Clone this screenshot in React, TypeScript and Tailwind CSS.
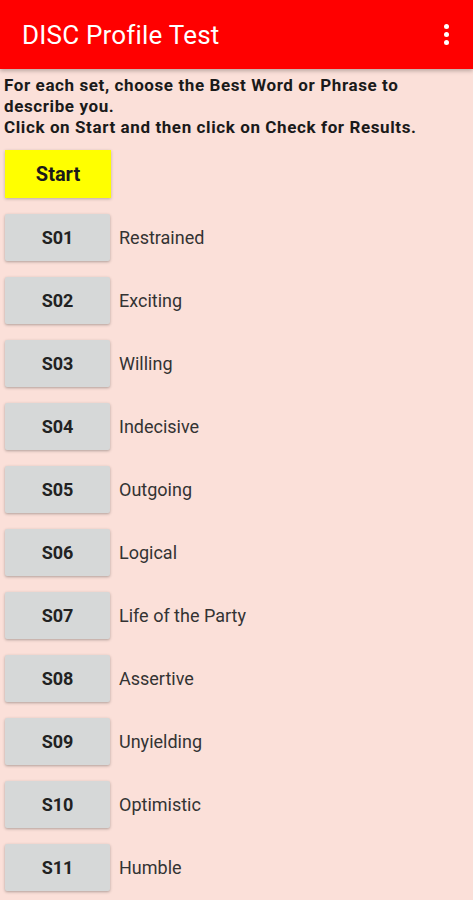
const words = [
  "Restrained",
  "Exciting",
  "Willing",
  "Indecisive",
  "Outgoing",
  "Logical",
  "Life of the Party",
  "Assertive",
  "Unyielding",
  "Optimistic",
  "Humble",
]

export default function App() {
  return (
    <div className="h-[900px] overflow-hidden bg-[#fbe0d9] font-['Roboto',sans-serif]">
      <header className="h-[69px] bg-[#ff0000] flex items-center justify-between pl-[22px] pr-[24px] shadow-[0_2px_4px_rgba(0,0,0,0.25)]">
        <h1 className="text-white text-[26px] tracking-[0.2px] leading-none">DISC Profile Test</h1>
        <div className="flex flex-col gap-[3px]">
          <span className="w-[5px] h-[5px] rounded-full bg-white" />
          <span className="w-[5px] h-[5px] rounded-full bg-white" />
          <span className="w-[5px] h-[5px] rounded-full bg-white" />
        </div>
      </header>
      <p className="px-[4px] pt-[6px] text-[17px] leading-[21px] font-bold tracking-[0.6px] text-[#1a1a1a]">
        For each set, choose the Best Word or Phrase to describe you.
        <br />
        Click on Start and then click on Check for Results.
      </p>
      <div className="px-[5px] pt-[12px] flex flex-col gap-[16px]">
        <button className="w-[106px] h-[48px] bg-[#ffff00] text-[20px] font-bold text-[#1a1a1a] shadow-[0_1px_3px_rgba(0,0,0,0.25)]">
          Start
        </button>
        {words.map((w, i) => (
          <div key={i} className="flex items-center gap-[9px]">
            <button className="w-[105px] h-[47px] shrink-0 rounded-[2px] bg-[#d6d8d8] text-[18px] font-bold text-[#222] shadow-[0_1px_3px_rgba(0,0,0,0.3)]">
              S{String(i + 1).padStart(2, "0")}
            </button>
            <span className="text-[18px] text-[#333]">{w}</span>
          </div>
        ))}
      </div>
    </div>
  )
}
